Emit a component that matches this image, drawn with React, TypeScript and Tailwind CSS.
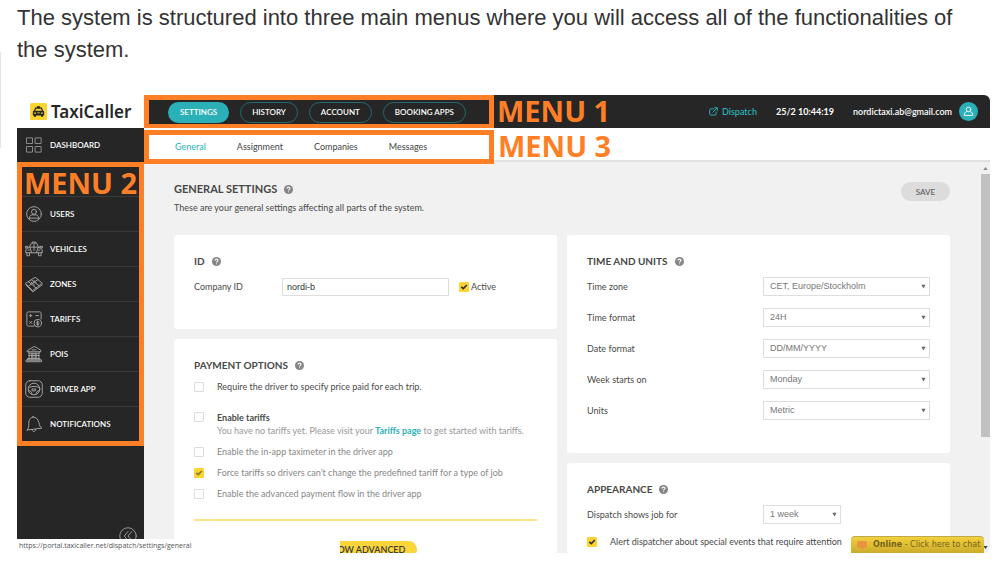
import type { ReactNode } from "react";

function Icon({ children, className = "size-[18px]", box = "0 0 24 24" }: { children: ReactNode; className?: string; box?: string }) {
  return (
    <svg viewBox={box} className={className} fill="none" stroke="currentColor" strokeWidth="1.3" strokeLinecap="round" strokeLinejoin="round" aria-hidden="true">
      {children}
    </svg>
  );
}

const dashboardIcon = (
  <Icon>
    <rect x="2.5" y="2.5" width="7.5" height="7.5" />
    <rect x="14" y="2.5" width="7.5" height="7.5" />
    <rect x="2.5" y="14" width="7.5" height="7.5" />
    <rect x="14" y="14" width="7.5" height="7.5" />
  </Icon>
);

const sideItems: { label: string; icon: ReactNode }[] = [
  {
    label: "USERS",
    icon: (
      <Icon>
        <circle cx="12" cy="12" r="9.8" />
        <circle cx="12" cy="9" r="3.3" />
        <path d="M6 18v-1.5c0-2 1.5-3 3.500-3.300M18 18v-1.500c0-2-1.500-3-3.500-3.300M6 17.500h12M9.500 12.500c1.500 1.500 3.500 1.500 5 0" />
      </Icon>
    ),
  },
  {
    label: "VEHICLES",
    icon: (
      <Icon>
        <path d="M6 9.500 8 5c.3-.6.700-.8 1.300-.8h5.400c.6 0 1 .2 1.300.8l2 4.500M9.500 4V2.800h5V4M.800 8.500h3v2h-3ZM20.200 8.500h3v2h-3ZM4.500 10.500c-2.300.6-3.500 2-3.500 4v2.500h22v-2.500c0-2-1.200-3.400-3.500-4M2.500 17v4H6v-4M18 17v4h3.500v-4M5.500 9.500h13M6.500 10 9 17M17.500 10 15 17M12 6v8M4 13.500h2M18 13.500h2" />
      </Icon>
    ),
  },
  {
    label: "ZONES",
    icon: (
      <Icon>
        <path d="M1 11 13.500 3 23 11 10.500 20.500ZM1 13l9.500 9.500L23 13M4.500 9 15 17.500M8.500 6.300 19 14.500M5 14.500 17.500 6M8 9.500l5 4M12 7.500l3 2.500" />
      </Icon>
    ),
  },
  {
    label: "TARIFFS",
    icon: (
      <Icon>
        <path d="M12 21.500H4.500c-1.200 0-2-.8-2-2v-15c0-1.200.8-2 2-2h15c1.200 0 2 .8 2 2V12M6 7.500h3M7.500 6v3M14.500 7.500H18M6.300 15.300l2.600 2.600M8.900 15.300l-2.600 2.600" />
        <circle cx="17" cy="17.500" r="5" />
        <path d="M17 14.500v6M18.700 16c-1-.9-3.200-.7-3.200.6 0 1.400 3.200.6 3.200 2 0 1.200-2.400 1.300-3.400.4" />
      </Icon>
    ),
  },
  {
    label: "POIS",
    icon: (
      <Icon>
        <path d="M12 2 3 7.500V9h18V7.500ZM5 9v2h14V9M5.500 11v7M9 11v7M10.500 11v7M13.500 11v7M15 11v7M18.500 11v7M4 18h16v2H4ZM2 20h20v2.300H2ZM5 14h14M9.500 6.500h5" />
      </Icon>
    ),
  },
  {
    label: "DRIVER APP",
    icon: (
      <Icon>
        <rect x="1" y="1" width="22" height="22" rx="5.500" />
        <circle cx="12" cy="12" r="7.800" />
        <path d="M4.800 10c4-2 10.400-2 14.400 0M5 14.500c2.500-.5 4 1 4.300 4.600M19 14.500c-2.500-.5-4 1-4.300 4.600M9.500 12h5l-1 2.500h-3Z" />
      </Icon>
    ),
  },
  {
    label: "NOTIFICATIONS",
    icon: (
      <Icon>
        <path d="M3 20c2-2 2-4.500 2-8.500C5 6 7.500 3 11 3s6.500 2.500 7.500 7c.8 4 1.500 6 4 7.500L3 20ZM9.500 20c.7 3 4 3 5-.8M9.500 3c0-1.500 2-2 3 .1" />
      </Icon>
    ),
  },
];

function Help() {
  return (
    <svg viewBox="0 0 16 16" className="size-[9px] shrink-0" role="img" aria-label="Help">
      <circle cx="8" cy="8" r="8" fill="#858585" />
      <path d="M5.400 6.200c0-3.300 5.200-3.200 5.200-.2 0 1.900-2.500 1.800-2.500 3.700M8.100 11.400v1.600" fill="none" stroke="#fff" strokeWidth="2" />
    </svg>
  );
}

function Title({ children }: { children: ReactNode }) {
  return (
    <h2 className="flex h-5 items-center gap-[7px] text-[10px] font-bold text-[#484848]">
      {children}
      <Help />
    </h2>
  );
}

function Tick({ id, checked = false, muted = false }: { id: string; checked?: boolean; muted?: boolean }) {
  return (
    <span className="grid size-[10px] shrink-0">
      <input
        id={id}
        type="checkbox"
        defaultChecked={checked}
        className="peer col-start-1 row-start-1 size-[10px] appearance-none rounded-[1px] border border-[#dcdcdc] bg-white checked:border-[#fbd431] checked:bg-[#fbd431]"
      />
      <svg viewBox="0 0 10 10" className="pointer-events-none invisible col-start-1 row-start-1 size-[10px] peer-checked:visible" aria-hidden="true">
        <path d="M2.300 4.800 4.300 6.600 7.800 3" fill="none" stroke={muted ? "#86763a" : "#333"} strokeWidth="1.700" />
      </svg>
    </span>
  );
}

function Choice({ id, value, narrow = false }: { id: string; value: string; narrow?: boolean }) {
  return (
    <span className={narrow ? "grid w-[78px] items-center" : "grid w-[167px] items-center"}>
      <select id={id} className="col-start-1 row-start-1 h-[19px] w-full appearance-none border border-[#dedede] bg-white pl-1.5 font-['Liberation_Sans',sans-serif] text-[9px] text-[#777]">
        <option>{value}</option>
      </select>
      <svg viewBox="0 0 6 6" className="pointer-events-none col-start-1 row-start-1 mr-1 size-[5px] justify-self-end" aria-hidden="true">
        <path d="M.5 1h5L3 5.500Z" fill="#666" />
      </svg>
    </span>
  );
}

const unitRows = [
  { id: "tz", label: "Time zone", value: "CET, Europe/Stockholm" },
  { id: "tf", label: "Time format", value: "24H" },
  { id: "df", label: "Date format", value: "DD/MM/YYYY" },
  { id: "ws", label: "Week starts on", value: "Monday" },
  { id: "un", label: "Units", value: "Metric" },
];

const lowerOptions = [
  { id: "taximeter", label: "Enable the in-app taximeter in the driver app", checked: false },
  { id: "force", label: "Force tariffs so drivers can’t change the predefined tariff for a type of job", checked: true },
  { id: "flow", label: "Enable the advanced payment flow in the driver app", checked: false },
];

const card = "rounded-[3px] bg-white px-5 pt-4";
const pill = "h-[21px] rounded-full border border-[#236b70] px-[11px] text-[8px] font-semibold text-white";
const mark = "font-['Open_Sans','Noto_Sans',sans-serif] text-[29px] font-bold text-[#ff7f27]";

function Sidebar() {
  return (
    <aside className="flex w-[127px] shrink-0 flex-col bg-[#262626] text-[8px] font-semibold text-white">
      <a href="#home" className="flex h-[33px] shrink-0 items-center gap-1 bg-white pl-[13px] text-[#262626]">
        <svg viewBox="0 0 16 16" className="size-[17px] shrink-0" aria-hidden="true">
          <rect width="16" height="16" rx="1.500" fill="#fbd431" />
          <path d="M6.500 3h3v1.300h1.600l1.300 3 .9.700v3.700h-1v1.200h-2v-1.200H5.700v1.200h-2v-1.200h-1V8l.9-.7 1.300-3h1.600Z" fill="#262626" />
          <path d="M5.600 5.500h4.800l.7 1.700H4.900ZM4 9h1.700v1H4ZM10.300 9H12v1h-1.700ZM6.700 9h2.600v.700H6.700Z" fill="#fbd431" />
        </svg>
        <span className="font-['Noto_Sans',sans-serif] text-[17px] font-semibold">TaxiCaller</span>
      </a>
      <a href="#dashboard" className="flex h-[34px] shrink-0 items-center gap-[7px] pl-2">
        <span className="text-[#8d8d8d]">{dashboardIcon}</span>DASHBOARD
      </a>
      <nav aria-label="Menu 2" className="shrink-0 border-[5px] border-[#ff7f27]">
        <div className="flex h-[30px] items-center justify-center whitespace-nowrap border-b border-[#3a3a3a]">
          <span className={`${mark} leading-[30px] pt-[3px]`}>MENU 2</span>
        </div>
        {sideItems.map((item) => (
          <a key={item.label} href="#section" className="flex h-[35px] items-center gap-[7px] border-b border-[#3a3a3a] pl-[3px] last:h-[34px] last:border-b-0">
            <span className="text-[#a2a2a2]">{item.icon}</span>
            {item.label}
          </a>
        ))}
      </nav>
      <button aria-label="Collapse sidebar" className="mb-2 mt-auto mr-[7px] self-end text-[#9a9a9a]">
        <Icon>
          <circle cx="12" cy="12" r="11" />
          <path d="m12 6-5 6 5 6M17 6l-5 6 5 6" />
        </Icon>
      </button>
    </aside>
  );
}

function TopBar() {
  return (
    <header className="flex h-[33px] shrink-0 items-start justify-between bg-[#262626]">
      <div className="flex items-start gap-[3px]">
        <nav aria-label="Menu 1" className="flex h-[34px] w-[350px] shrink-0 items-center gap-[11px] border-[5px] border-[#ff7f27] pl-[19px]">
          <button className="h-[21px] rounded-full bg-[#2bb0b8] px-3 text-[8px] font-semibold text-white">SETTINGS</button>
          <button className={pill}>HISTORY</button>
          <button className={pill}>ACCOUNT</button>
          <button className={pill}>BOOKING APPS</button>
        </nav>
        <span className={`${mark} leading-[31px]`}>MENU 1</span>
      </div>
      <div className="flex h-[33px] items-center pr-3 text-[9px] font-bold text-white">
        <a href="#dispatch" className="mr-[19px] flex items-center gap-1 font-semibold text-[#2bb0b8]">
          <Icon className="size-[9px]">
            <path d="M19 13v6c0 1.500-1 2.500-2.500 2.500h-12C3 21.500 2 20.500 2 19V7.500C2 6 3 5 4.500 5H12M15 2h7v7M21.500 2.500 10 14" strokeWidth="2.600" />
          </Icon>
          Dispatch
        </a>
        <time className="mr-[19px]">25/2 10:44:19</time>
        <span className="mr-[7px] font-semibold">nordictaxi.ab@gmail.com</span>
        <button aria-label="Account" className="grid size-[19px] place-items-center rounded-full bg-[#2bb0b8]">
          <Icon className="size-[11px]">
            <circle cx="12" cy="7.500" r="5" strokeWidth="2" />
            <path d="M7.500 12.500C4 13.500 3 16 3 20.500h18c0-4.500-1-7-4.500-8" strokeWidth="2" />
          </Icon>
        </button>
      </div>
    </header>
  );
}

function SubBar() {
  return (
    <div className="flex h-[34px] shrink-0 items-start gap-1 border-b-2 border-[#e2e2e2] bg-white pt-0.5">
      <nav aria-label="Menu 3" className="flex h-[34px] w-[350px] shrink-0 items-center gap-[31px] border-[5px] border-[#ff7f27] pl-[26px] text-[9px] text-[#444]">
        <a href="#general" className="text-[#2bb0b8]">General</a>
        <a href="#assignment">Assignment</a>
        <a href="#companies">Companies</a>
        <a href="#messages">Messages</a>
      </nav>
      <span className={`${mark} leading-[31px]`}>MENU 3</span>
    </div>
  );
}

function Settings() {
  return (
    <main className="min-w-0 flex-1 overflow-hidden pl-[30px] pr-[31px] pt-[17px] text-[9px] text-[#4a4a4a]">
      <div className="flex h-14 items-start justify-between">
        <div>
          <h1 className="flex h-5 items-center gap-[7px] text-[11px] font-bold text-[#484848]">
            GENERAL SETTINGS <Help />
          </h1>
          <p className="leading-[18px]">These are your general settings affecting all parts of the system.</p>
        </div>
        <button className="mt-[3px] h-[19px] w-[49px] rounded-full bg-[#dcdcdc] text-[8px] font-semibold text-[#666]">SAVE</button>
      </div>

      <div className="grid grid-cols-2 items-start gap-[10px]">
        <div className="grid gap-[10px]">
          <section className={`${card} pb-[27px]`}>
            <Title>ID</Title>
            <div className="flex h-[31px] items-center">
              <label htmlFor="company" className="w-[88px]">Company ID</label>
              <input id="company" defaultValue="nordi-b" className="h-[18px] w-[167px] border border-[#dedede] px-1 font-['Liberation_Sans',sans-serif] text-[9px] text-[#333]" />
              <span className="ml-[10px] flex items-center gap-0.5">
                <Tick id="active" checked />
                <label htmlFor="active">Active</label>
              </span>
            </div>
          </section>

          <section className={`${card} pb-10`}>
            <Title>PAYMENT OPTIONS</Title>
            <div className="flex h-[23px] items-center gap-[13px]">
              <Tick id="require" />
              <label htmlFor="require">Require the driver to specify price paid for each trip.</label>
            </div>
            <div className="mt-[13px] flex gap-[13px] pb-1">
              <span className="pt-px">
                <Tick id="tariffs" />
              </span>
              <div className="leading-[13px]">
                <label htmlFor="tariffs" className="block font-bold">Enable tariffs</label>
                <p className="text-[#999]">
                  You have no tariffs yet. Please visit your <a href="#tariffs" className="font-bold text-[#2bb0b8]">Tariffs page</a> to get started with tariffs.
                </p>
              </div>
            </div>
            {lowerOptions.map((o) => (
              <div key={o.id} className="flex h-[21px] items-center gap-[13px] text-[#888]">
                <Tick id={o.id} checked={o.checked} muted />
                <label htmlFor={o.id}>{o.label}</label>
              </div>
            ))}
            <hr className="mt-[15px] border-t-2 border-[#fde58a]" />
            <button className="mx-auto mt-5 block h-[17px] w-[102px] whitespace-nowrap rounded-full bg-[#fbd53a] text-[9px] font-semibold leading-[17px] text-[#3c3c3c]">SHOW ADVANCED</button>
          </section>
        </div>

        <div className="grid gap-[10px]">
          <section className={`${card} pb-[27px]`}>
            <Title>TIME AND UNITS</Title>
            {unitRows.map((r) => (
              <div key={r.id} className="flex h-[31px] items-center justify-between">
                <label htmlFor={r.id}>{r.label}</label>
                <Choice id={r.id} value={r.value} />
              </div>
            ))}
          </section>

          <section className={`${card} pb-20`}>
            <Title>APPEARANCE</Title>
            <div className="flex h-[31px] items-center">
              <label htmlFor="shows" className="w-44">Dispatch shows job for</label>
              <Choice id="shows" value="1 week" narrow />
            </div>
            <div className="flex h-[23px] items-center gap-[13px]">
              <Tick id="alert" checked />
              <label htmlFor="alert">Alert dispatcher about special events that require attention</label>
            </div>
          </section>
        </div>
      </div>
    </main>
  );
}

export default function App() {
  return (
    <div className="relative flex h-screen flex-col overflow-hidden bg-white pb-[10px] pl-[17px] pr-[14px] font-['Lato',sans-serif]">
      <span className="absolute left-0 top-[52px] h-24 w-px bg-[#e6e6e6]" aria-hidden="true" />
      <p className="min-h-[95px] shrink-0 pr-6 pt-0.5 font-['Liberation_Sans',sans-serif] text-[22px] leading-8 text-[#333]">
        The system is structured into three main menus where you will access all of the functionalities of the system.
      </p>

      <div className="relative flex min-h-0 flex-1 overflow-hidden rounded-tr-md rounded-br-md bg-[#f1f1f1]">
        <Sidebar />
        <div className="flex min-w-0 flex-1 flex-col">
          <TopBar />
          <SubBar />
          <div className="flex min-h-0 flex-1">
            <Settings />
            <div className="flex w-[9px] shrink-0 flex-col items-center justify-between pb-1 pt-[5px]" aria-hidden="true">
              <svg viewBox="0 0 6 4" className="h-[3px] w-[5px]">
                <path d="M0 4h6L3 0Z" fill="#888" />
              </svg>
              <div className="mb-auto mt-1 h-[263px] w-full bg-[#c1c1c1]" />
              <svg viewBox="0 0 6 4" className="h-[3px] w-[5px]">
                <path d="M0 0h6L3 4Z" fill="#444" />
              </svg>
            </div>
          </div>
        </div>

        <div className="absolute bottom-0 left-0 h-[14px] w-[323px] rounded-tr-sm bg-white pl-0.5 font-['Open_Sans',sans-serif] text-[7px] leading-[14px] text-[#555]">
          https://portal.taxicaller.net/dispatch/settings/general
        </div>
        <button className="absolute bottom-0 right-1.5 flex h-[17px] w-[133px] items-center gap-1.5 whitespace-nowrap rounded-t-sm border-t border-[#bfa94a] bg-linear-to-b from-[#f3d03c] to-[#ccab2b] pl-1.5 font-['DejaVu_Sans',sans-serif] text-[8px] text-[#76621b]">
          <svg viewBox="0 0 10 9" className="h-[9px] w-[10px] shrink-0" aria-hidden="true">
            <path d="M2 0h6a2 2 0 0 1 2 2v3a2 2 0 0 1-2 2H7L5.500 9 4.500 7H2a2 2 0 0 1-2-2V2a2 2 0 0 1 2-2Z" fill="#ea9440" />
          </svg>
          <span><b>Online</b> - Click here to chat</span>
        </button>
      </div>
    </div>
  );
}
